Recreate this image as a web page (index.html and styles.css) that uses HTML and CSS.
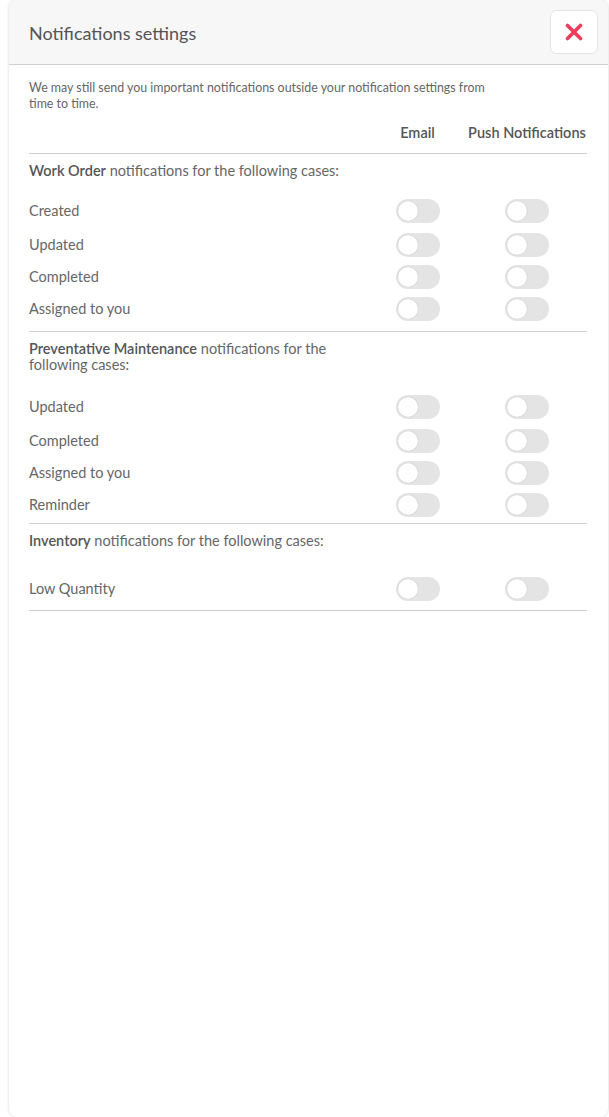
FILE: index.html
```html
<!DOCTYPE html>
<html lang="en">
<head>
<meta charset="utf-8">
<title>Notifications settings</title>
<link rel="stylesheet" href="styles.css">
</head>
<body>
<div class="modal">
  <header class="modal-header">
    <h1 class="title">Notifications settings</h1>
    <button class="close" type="button" aria-label="Close">
      <svg width="18" height="18" viewBox="0 0 18 18"><path d="M2.5 2.5 L15.5 15.5 M15.5 2.5 L2.5 15.5" stroke="#f23b5c" stroke-width="3.6" stroke-linecap="round"/></svg>
    </button>
  </header>
  <div class="modal-body">
    <p class="intro">We may still send you important notifications outside your notification settings from time to time.</p>
    <div class="grid cols">
      <span></span>
      <span class="col-head">Email</span>
      <span class="col-head">Push Notifications</span>
    </div>

    <section class="group group-wo">
      <p class="group-title"><strong>Work Order</strong> notifications for the following cases:</p>
      <div class="grid row first"><span class="label">Created</span><span class="cell"><span class="toggle"></span></span><span class="cell"><span class="toggle"></span></span></div>
      <div class="grid row"><span class="label">Updated</span><span class="cell"><span class="toggle"></span></span><span class="cell"><span class="toggle"></span></span></div>
      <div class="grid row"><span class="label">Completed</span><span class="cell"><span class="toggle"></span></span><span class="cell"><span class="toggle"></span></span></div>
      <div class="grid row"><span class="label">Assigned to you</span><span class="cell"><span class="toggle"></span></span><span class="cell"><span class="toggle"></span></span></div>
    </section>

    <section class="group group-pm">
      <p class="group-title"><strong>Preventative Maintenance</strong> notifications for the following cases:</p>
      <div class="grid row first"><span class="label">Updated</span><span class="cell"><span class="toggle"></span></span><span class="cell"><span class="toggle"></span></span></div>
      <div class="grid row"><span class="label">Completed</span><span class="cell"><span class="toggle"></span></span><span class="cell"><span class="toggle"></span></span></div>
      <div class="grid row"><span class="label">Assigned to you</span><span class="cell"><span class="toggle"></span></span><span class="cell"><span class="toggle"></span></span></div>
      <div class="grid row"><span class="label">Reminder</span><span class="cell"><span class="toggle"></span></span><span class="cell"><span class="toggle"></span></span></div>
    </section>

    <section class="group group-inv">
      <p class="group-title"><strong>Inventory</strong> notifications for the following cases:</p>
      <div class="grid row first"><span class="label">Low Quantity</span><span class="cell"><span class="toggle"></span></span><span class="cell"><span class="toggle"></span></span></div>
    </section>
  </div>
</div>
</body>
</html>
```

FILE: styles.css
```css
* { box-sizing: border-box; }
html, body { margin: 0; padding: 0; background: #fff; overflow: hidden; }
body {
  font-family: Lato, "Open Sans", sans-serif;
  color: #666;
  font-size: 14.5px;
  line-height: 16px;
}
.modal {
  margin-left: 9px;
  width: 599px;
  height: 1117px;
  background: #fff;
  border-radius: 8px;
  box-shadow: 0 0 3px rgba(0,0,0,0.18);
  overflow: hidden;
}
.modal-header {
  height: 65px;
  background: #f7f7f7;
  border-bottom: 1px solid #cfcfcf;
  display: flex;
  align-items: flex-start;
  justify-content: space-between;
  padding: 10px 10px 0 20px;
}
.title {
  margin: 11px 0 0;
  font-size: 18px;
  line-height: 24px;
  font-weight: 400;
  color: #555;
}
.close {
  width: 48px;
  height: 44px;
  background: #fff;
  border: 1px solid #e6e6e6;
  border-radius: 6px;
  display: flex;
  align-items: center;
  justify-content: center;
  padding: 0;
  cursor: pointer;
}
.modal-body { padding: 0 21px 0 20px; }
.intro {
  margin: 15px 0 0;
  max-width: 475px;
  font-size: 12.4px;
  color: #666;
}
.grid {
  display: grid;
  grid-template-columns: 339px 99px 120px;
  align-items: center;
}
.cols {
  margin-top: 13px;
  padding-bottom: 12px;
  border-bottom: 1px solid #cfcfcf;
}
.col-head {
  text-align: center;
  font-weight: 600;
  color: #555;
  white-space: nowrap;
}
.group { border-bottom: 1px solid #cfcfcf; }
.group-title {
  margin: 0;
  padding-top: 9px;
  width: 339px;
  color: #666;
}
.group-title strong { font-weight: 600; color: #555; }
.row { height: 32px; }
.row.first { margin-top: 16px; margin-bottom: 2px; }
.group-wo { padding-bottom: 6px; }
.group-pm .row.first { margin-top: 18px; }
.group-pm { padding-bottom: 2px; }
.group-inv .row.first { margin-top: 24px; margin-bottom: 0; }
.group-inv { padding-bottom: 5px; }
.label { color: #666; }
.cell { display: flex; justify-content: center; }
.toggle {
  position: relative;
  width: 44px;
  height: 24px;
  border-radius: 12px;
  background: #e4e4e4;
  display: block;
}
.toggle::after {
  content: "";
  position: absolute;
  left: 2px;
  top: 2px;
  width: 20px;
  height: 20px;
  border-radius: 50%;
  background: #fff;
  box-shadow: 0 0 1px rgba(0,0,0,0.25);
}
```
